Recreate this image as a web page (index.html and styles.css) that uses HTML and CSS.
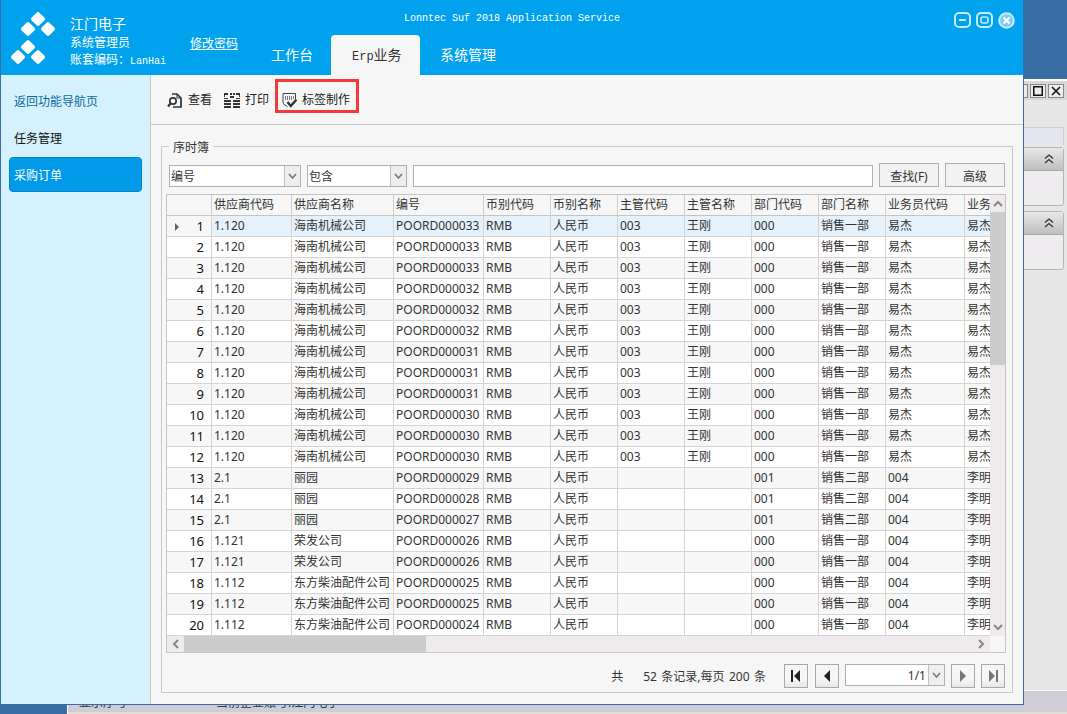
FILE: index.html
```html
<!DOCTYPE html>
<html lang="zh-CN">
<head>
  <meta charset="UTF-8" />
  <title>序时簿</title>
  <link rel="stylesheet" href="styles.css">
</head>
<body>

  <!-- window left open behind the app -->
  <div class="back-window">
    <div class="back-title">
      <span class="back-btn"></span>
      <span class="back-btn"><svg width="10" height="10" viewBox="0 0 10 10"><rect x="0.75" y="0.75" width="8.5" height="8.5" fill="none" stroke="#111" stroke-width="1.5"/></svg></span>
      <span class="back-btn"><svg width="10" height="10" viewBox="0 0 10 10"><path d="M1 1 L9 9 M9 1 L1 9" stroke="#111" stroke-width="1.6"/></svg></span>
    </div>
    <div class="back-body">
      <div class="back-head"></div>
      <div class="back-panel">
        <div class="back-panel-title"><svg width="12" height="10" viewBox="0 0 12 10"><path d="M2 4.5 L6 1 L10 4.5 M2 9 L6 5.5 L10 9" fill="none" stroke="#333" stroke-width="1.3"/></svg></div>
      </div>
      <div class="back-panel">
        <div class="back-panel-title"><svg width="12" height="10" viewBox="0 0 12 10"><path d="M2 4.5 L6 1 L10 4.5 M2 9 L6 5.5 L10 9" fill="none" stroke="#333" stroke-width="1.3"/></svg></div>
      </div>
    </div>
    <div class="back-status">
      <span class="back-status-a">显示序号</span>
      <span class="back-status-b">当前企业账号:江门电子</span>
    </div>
  </div>

  <!-- APP WINDOW -->
  <div class="app-window">

    <div class="top-bar">
      <svg class="logo" width="70" height="75" viewBox="0 0 70 75">
        <g fill="#fff">
          <rect x="32.5" y="13.5" width="11" height="11" rx="2" transform="rotate(45 38 19)"/>
          <rect x="22.5" y="23.5" width="11" height="11" rx="2" transform="rotate(45 28 29)"/>
          <rect x="42.5" y="23.5" width="11" height="11" rx="2" transform="rotate(45 48 29)"/>
          <rect x="22.5" y="41.5" width="11" height="11" rx="2" transform="rotate(45 28 47)"/>
          <rect x="12.5" y="51.5" width="11" height="11" rx="2" transform="rotate(45 18 57)"/>
          <rect x="32.5" y="51.5" width="11" height="11" rx="2" transform="rotate(45 38 57)"/>
        </g>
      </svg>
      <div class="user-info">
        <div class="company">江门电子</div>
        <div class="user-name">系统管理员</div>
        <div class="user-code">账套编码&#xFF1A;<span class="mono">LanHai</span></div>
      </div>
      <a class="change-pwd" href="#">修改密码</a>
      <div class="top-right">
        <div class="title-row">
          <span class="app-title">Lonntec Suf 2018 Application Service</span>
          <div class="win-controls">
            <svg width="17" height="16" viewBox="0 0 17 16"><rect x="1" y="1" width="15" height="14" rx="4" fill="none" stroke="#c4ecfd" stroke-width="2"/><rect x="5" y="7" width="7" height="2" fill="#c4ecfd"/></svg>
            <svg width="17" height="16" viewBox="0 0 17 16"><rect x="1" y="1" width="15" height="14" rx="4" fill="none" stroke="#c4ecfd" stroke-width="2"/><rect x="5" y="5" width="7" height="6" rx="2" fill="none" stroke="#c4ecfd" stroke-width="1.6"/></svg>
            <svg width="17" height="17" viewBox="0 0 17 17"><circle cx="8.5" cy="8.5" r="7.3" fill="#7fcdf2" stroke="#c4ecfd" stroke-width="2"/><path d="M5.5 5.5 L11.5 11.5 M11.5 5.5 L5.5 11.5" stroke="#fff" stroke-width="2.2"/></svg>
          </div>
        </div>
        <div class="tabs">
          <a class="tab tab-first" href="#">工作台</a>
          <a class="tab active" href="#"><span class="mono-tab">Erp</span>业务</a>
          <a class="tab" href="#">系统管理</a>
        </div>
      </div>
    </div>

    <div class="app-body">

      <div class="sidebar">
        <a class="side-item back-link" href="#">返回功能导航页</a>
        <a class="side-item" href="#">任务管理</a>
        <a class="side-item selected" href="#">采购订单</a>
      </div>

      <div class="main">

        <div class="toolbar">
          <a class="tool tool-view" href="#">
            <svg width="15" height="15" viewBox="0 0 15 15">
              <path d="M5 1 H10 L14 5 V14 H6" fill="none" stroke="#333" stroke-width="1.7"/>
              <path d="M10 1 V5 H14" fill="none" stroke="#333" stroke-width="1"/>
              <circle cx="6" cy="8" r="3.2" fill="#f6f6f6" stroke="#333" stroke-width="1.7"/>
              <path d="M3.6 10.5 L1 13.5" stroke="#333" stroke-width="2.2"/>
            </svg>
            查看
          </a>
          <a class="tool tool-print" href="#">
            <svg width="16" height="15" viewBox="0 0 16 15" fill="#333">
              <rect x="0" y="0" width="4" height="2"/><rect x="6" y="0" width="2" height="2"/><rect x="9" y="0" width="2" height="2"/><rect x="12" y="0" width="4" height="2"/>
              <rect x="0" y="2" width="1" height="2"/><rect x="6" y="3" width="4" height="2"/><rect x="15" y="2" width="1" height="2"/>
              <rect x="0" y="5" width="4" height="1"/><rect x="12" y="5" width="4" height="1"/>
              <rect x="0" y="7" width="7" height="2"/><rect x="9" y="7" width="7" height="2"/>
              <rect x="0" y="10" width="7" height="2"/><rect x="9" y="10" width="7" height="2"/>
              <rect x="0" y="13" width="7" height="2"/><rect x="9" y="13" width="7" height="2"/>
            </svg>
            打印
          </a>
          <a class="tool tool-label" href="#">
            <span class="red-mark"></span>
            <svg width="15" height="15" viewBox="0 0 15 15">
              <path d="M1 0.5 H13.5 V6 M1 0.5 V9 Q1 11 3 12 L5.5 13.5" fill="none" stroke="#444" stroke-width="1"/>
              <path d="M3.5 3 V7 M5.5 3 V7 M7.5 3 V7 M9.5 3 V7 M11.5 3 V6" stroke="#777" stroke-width="1"/>
              <path d="M5.5 9 L8.8 13 L14.5 6.5" fill="none" stroke="#333" stroke-width="2.4"/>
            </svg>
            标签制作
          </a>
        </div>

        <div class="group">
          <span class="group-title">序时簿</span>

          <div class="search-row">
            <div class="combo combo-field"><span class="combo-text">编号</span><span class="combo-arrow"><svg width="9" height="6" viewBox="0 0 9 6"><path d="M1 1 L4.5 5 L8 1" fill="none" stroke="#777" stroke-width="1.6"/></svg></span></div>
            <div class="combo combo-op"><span class="combo-text">包含</span><span class="combo-arrow"><svg width="9" height="6" viewBox="0 0 9 6"><path d="M1 1 L4.5 5 L8 1" fill="none" stroke="#777" stroke-width="1.6"/></svg></span></div>
            <div class="search-input"></div>
            <button class="btn">查找(F)</button>
            <button class="btn">高级</button>
          </div>

          <div class="grid">
            <div class="grid-main">
              <div class="grid-clip">
                <table class="data-table">
                  <colgroup>
                    <col class="c-no"><col class="c-80"><col class="c-102"><col class="c-90"><col class="c-67"><col class="c-67"><col class="c-67"><col class="c-67"><col class="c-67"><col class="c-67"><col class="c-79"><col class="c-60">
                  </colgroup>
                  <thead>
                    <tr><th></th><th>供应商代码</th><th>供应商名称</th><th>编号</th><th>币别代码</th><th>币别名称</th><th>主管代码</th><th>主管名称</th><th>部门代码</th><th>部门名称</th><th>业务员代码</th><th>业务员名称</th></tr>
                  </thead>
                  <tbody>
                    <tr class="current"><td class="no"><span class="row-arrow"></span>1</td><td>1.120</td><td>海南机械公司</td><td>POORD000033</td><td>RMB</td><td>人民币</td><td>003</td><td>王刚</td><td>000</td><td>销售一部</td><td>易杰</td><td>易杰</td></tr>
                    <tr><td class="no">2</td><td>1.120</td><td>海南机械公司</td><td>POORD000033</td><td>RMB</td><td>人民币</td><td>003</td><td>王刚</td><td>000</td><td>销售一部</td><td>易杰</td><td>易杰</td></tr>
                    <tr><td class="no">3</td><td>1.120</td><td>海南机械公司</td><td>POORD000033</td><td>RMB</td><td>人民币</td><td>003</td><td>王刚</td><td>000</td><td>销售一部</td><td>易杰</td><td>易杰</td></tr>
                    <tr><td class="no">4</td><td>1.120</td><td>海南机械公司</td><td>POORD000032</td><td>RMB</td><td>人民币</td><td>003</td><td>王刚</td><td>000</td><td>销售一部</td><td>易杰</td><td>易杰</td></tr>
                    <tr><td class="no">5</td><td>1.120</td><td>海南机械公司</td><td>POORD000032</td><td>RMB</td><td>人民币</td><td>003</td><td>王刚</td><td>000</td><td>销售一部</td><td>易杰</td><td>易杰</td></tr>
                    <tr><td class="no">6</td><td>1.120</td><td>海南机械公司</td><td>POORD000032</td><td>RMB</td><td>人民币</td><td>003</td><td>王刚</td><td>000</td><td>销售一部</td><td>易杰</td><td>易杰</td></tr>
                    <tr><td class="no">7</td><td>1.120</td><td>海南机械公司</td><td>POORD000031</td><td>RMB</td><td>人民币</td><td>003</td><td>王刚</td><td>000</td><td>销售一部</td><td>易杰</td><td>易杰</td></tr>
                    <tr><td class="no">8</td><td>1.120</td><td>海南机械公司</td><td>POORD000031</td><td>RMB</td><td>人民币</td><td>003</td><td>王刚</td><td>000</td><td>销售一部</td><td>易杰</td><td>易杰</td></tr>
                    <tr><td class="no">9</td><td>1.120</td><td>海南机械公司</td><td>POORD000031</td><td>RMB</td><td>人民币</td><td>003</td><td>王刚</td><td>000</td><td>销售一部</td><td>易杰</td><td>易杰</td></tr>
                    <tr><td class="no">10</td><td>1.120</td><td>海南机械公司</td><td>POORD000030</td><td>RMB</td><td>人民币</td><td>003</td><td>王刚</td><td>000</td><td>销售一部</td><td>易杰</td><td>易杰</td></tr>
                    <tr><td class="no">11</td><td>1.120</td><td>海南机械公司</td><td>POORD000030</td><td>RMB</td><td>人民币</td><td>003</td><td>王刚</td><td>000</td><td>销售一部</td><td>易杰</td><td>易杰</td></tr>
                    <tr><td class="no">12</td><td>1.120</td><td>海南机械公司</td><td>POORD000030</td><td>RMB</td><td>人民币</td><td>003</td><td>王刚</td><td>000</td><td>销售一部</td><td>易杰</td><td>易杰</td></tr>
                    <tr><td class="no">13</td><td>2.1</td><td>丽园</td><td>POORD000029</td><td>RMB</td><td>人民币</td><td></td><td></td><td>001</td><td>销售二部</td><td>004</td><td>李明</td></tr>
                    <tr><td class="no">14</td><td>2.1</td><td>丽园</td><td>POORD000028</td><td>RMB</td><td>人民币</td><td></td><td></td><td>001</td><td>销售二部</td><td>004</td><td>李明</td></tr>
                    <tr><td class="no">15</td><td>2.1</td><td>丽园</td><td>POORD000027</td><td>RMB</td><td>人民币</td><td></td><td></td><td>001</td><td>销售二部</td><td>004</td><td>李明</td></tr>
                    <tr><td class="no">16</td><td>1.121</td><td>荣发公司</td><td>POORD000026</td><td>RMB</td><td>人民币</td><td></td><td></td><td>000</td><td>销售一部</td><td>004</td><td>李明</td></tr>
                    <tr><td class="no">17</td><td>1.121</td><td>荣发公司</td><td>POORD000026</td><td>RMB</td><td>人民币</td><td></td><td></td><td>000</td><td>销售一部</td><td>004</td><td>李明</td></tr>
                    <tr><td class="no">18</td><td>1.112</td><td>东方柴油配件公司</td><td>POORD000025</td><td>RMB</td><td>人民币</td><td></td><td></td><td>000</td><td>销售一部</td><td>004</td><td>李明</td></tr>
                    <tr><td class="no">19</td><td>1.112</td><td>东方柴油配件公司</td><td>POORD000025</td><td>RMB</td><td>人民币</td><td></td><td></td><td>000</td><td>销售一部</td><td>004</td><td>李明</td></tr>
                    <tr><td class="no">20</td><td>1.112</td><td>东方柴油配件公司</td><td>POORD000024</td><td>RMB</td><td>人民币</td><td></td><td></td><td>000</td><td>销售一部</td><td>004</td><td>李明</td></tr>
                  </tbody>
                </table>
              </div>
              <div class="vscroll">
                <span class="scroll-btn"><svg width="10" height="7" viewBox="0 0 10 7"><path d="M1 6 L5 2 L9 6" fill="none" stroke="#888" stroke-width="2"/></svg></span>
                <span class="vthumb"></span>
                <span class="scroll-fill"></span>
                <span class="scroll-btn"><svg width="10" height="7" viewBox="0 0 10 7"><path d="M1 1 L5 5 L9 1" fill="none" stroke="#888" stroke-width="2"/></svg></span>
              </div>
            </div>
            <div class="hscroll">
              <span class="scroll-btn h"><svg width="7" height="10" viewBox="0 0 7 10"><path d="M6 1 L2 5 L6 9" fill="none" stroke="#888" stroke-width="2"/></svg></span>
              <span class="hthumb"></span>
              <span class="scroll-fill"></span>
              <span class="scroll-btn h"><svg width="7" height="10" viewBox="0 0 7 10"><path d="M1 1 L5 5 L1 9" fill="none" stroke="#888" stroke-width="2"/></svg></span>
              <span class="scroll-corner"></span>
            </div>
          </div>

          <div class="pager">
            <span class="pager-total">共</span>
            <span class="pager-count">52 条记录,每页 200 条</span>
            <button class="page-btn"><svg width="12" height="14" viewBox="0 0 12 14" fill="#222"><rect x="1" y="1" width="2" height="12"/><path d="M10 1 V13 L4 7 Z"/></svg></button>
            <button class="page-btn"><svg width="12" height="14" viewBox="0 0 12 14" fill="#222"><path d="M9 1 V13 L3 7 Z"/></svg></button>
            <div class="combo combo-page"><span class="combo-text">1/1</span><span class="combo-arrow"><svg width="9" height="6" viewBox="0 0 9 6"><path d="M1 1 L4.5 5 L8 1" fill="none" stroke="#777" stroke-width="1.6"/></svg></span></div>
            <button class="page-btn"><svg width="12" height="14" viewBox="0 0 12 14" fill="#777"><path d="M3 1 V13 L9 7 Z"/></svg></button>
            <button class="page-btn"><svg width="12" height="14" viewBox="0 0 12 14" fill="#777"><path d="M2 1 V13 L8 7 Z"/><rect x="9" y="1" width="2" height="12"/></svg></button>
          </div>
        </div>

      </div>
    </div>
  </div>

</body>
</html>
```

FILE: styles.css
```css
* {
  margin: 0;
  padding: 0;
  box-sizing: border-box;
}

html, body {
  width: 1067px;
  height: 714px;
  overflow: hidden;
}

body {
  position: relative;
  background: #386ea3;
  font-family: "Noto Sans", "Noto Sans CJK SC", sans-serif;
  font-size: 12px;
  color: #333;
}

a {
  color: inherit;
  text-decoration: none;
}

.mono {
  font-family: "Liberation Mono", "Noto Sans CJK SC", monospace;
  font-size: 10px;
}

/* Window behind the app */
.back-window {
  position: absolute;
  left: 67px;
  top: 79px;
  right: 0;
  bottom: 0;
  display: flex;
  flex-direction: column;
  background: #e6e6e6;
  border-top: 2px solid #fff;
  border-left: 1px solid #fff;
}

.back-title {
  height: 19px;
  background: #d8d8d8;
  display: flex;
  justify-content: flex-end;
  align-items: center;
  gap: 2px;
  padding-right: 3px;
}

.back-btn {
  width: 16px;
  height: 14px;
  background: #ececec;
  border: 1px solid #888;
  display: flex;
  align-items: center;
  justify-content: center;
}

.back-body {
  flex: 1;
  display: flex;
  flex-direction: column;
  gap: 5px;
  padding: 27px 3px 0 0;
  background: #e7e7e7;
}

.back-head {
  height: 18px;
  margin-bottom: -3px;
  background: #e6e6f0;
  border-top: 1px solid #cfcfd8;
  border-right: 1px solid #cfcfd8;
}

.back-panel {
  height: 59px;
  background: #eeecee;
  border: 1px solid #b5b5b5;
  border-radius: 3px;
}

.back-panel-title {
  height: 23px;
  background: linear-gradient(#e8e8e8, #bfbfbf);
  border-bottom: 1px solid #a8a8a8;
  display: flex;
  justify-content: flex-end;
  align-items: center;
  padding-right: 8px;
}

.back-status {
  height: 24px;
  background: #cfccd8;
  border-top: 1px solid #f4f4f4;
  border-bottom: 2px solid #e0dfd8;
  display: flex;
  align-items: flex-end;
  font-size: 12px;
  line-height: 16px;
  color: #333;
  padding: 0 0 1px 11px;
}

.back-status-b {
  margin-left: 89px;
}

/* App window */
.app-window {
  position: absolute;
  left: 0;
  top: 0;
  width: 1024px;
  height: 705px;
  display: flex;
  flex-direction: column;
  border: 1px solid #386ea3;
  border-top: 0;
  background: #f6f6f6;
}

.top-bar {
  height: 75px;
  background: #00a2ee;
  color: #fff;
  display: flex;
  flex-shrink: 0;
}

.logo {
  flex-shrink: 0;
  margin-left: -1px;
}

.user-info {
  width: 120px;
  padding-top: 14px;
  flex-shrink: 0;
}

.company {
  font-size: 14px;
  line-height: 20px;
}

.user-name {
  line-height: 18px;
}

.user-code {
  line-height: 15px;
}

.change-pwd {
  flex-shrink: 0;
  width: 61px;
  margin-top: 35px;
  height: 17px;
  line-height: 17px;
  text-decoration: underline;
}

.top-right {
  flex: 1;
  display: flex;
  flex-direction: column;
}

.title-row {
  height: 35px;
  display: flex;
  align-items: flex-start;
  padding-left: 153px;
  padding-right: 8px;
}

.app-title {
  font-family: "Liberation Mono", monospace;
  font-size: 10px;
  line-height: 14px;
  margin-top: 12px;
}

.win-controls {
  margin-left: auto;
  margin-top: 12px;
  display: flex;
  gap: 5px;
}

.tabs {
  display: flex;
  height: 40px;
}

.tab {
  padding: 0 20px;
  font-size: 14px;
  line-height: 40px;
}

.tab-first {
  padding-right: 18px;
}

.tab.active {
  background: #f6f6f6;
  color: #333;
  border-radius: 4px 4px 0 0;
  width: 89px;
  padding: 0 0 0 21px;
}

.mono-tab {
  font-family: "Liberation Mono", monospace;
  font-size: 12px;
}

.app-body {
  flex: 1;
  display: flex;
  min-height: 0;
}

/* Sidebar */
.sidebar {
  width: 150px;
  flex-shrink: 0;
  background: #d5f1fe;
  border-right: 1px solid #c8c8c8;
  display: flex;
  flex-direction: column;
  gap: 2px;
  padding: 8px 8px 0 8px;
}

.side-item {
  height: 35px;
  line-height: 35px;
  padding-left: 4px;
  color: #111;
  border: 1px solid transparent;
  border-radius: 4px;
}

.side-item.back-link {
  color: #0a6a9c;
}

.side-item.selected {
  background: #009ae8;
  border-color: #0582c8;
  color: #fff;
}

/* Main area */
.main {
  flex: 1;
  display: flex;
  flex-direction: column;
  min-width: 0;
}

.toolbar {
  height: 50px;
  flex-shrink: 0;
  border-bottom: 1px solid #c8c8c8;
  display: flex;
  align-items: center;
  padding: 0 0 0 16px;
}

.tool {
  display: flex;
  align-items: center;
  gap: 6px;
  position: relative;
  color: #222;
  line-height: 16px;
  margin-top: 1px;
}

.tool-view {
  width: 57px;
}

.tool-print {
  width: 58px;
  gap: 5px;
}

.tool-label {
  gap: 5px;
}

.red-mark {
  position: absolute;
  left: -7px;
  top: -13px;
  width: 84px;
  height: 34px;
  border: 3px solid #f33a3a;
}

.group {
  position: relative;
  margin: 21px 10px 11px 10px;
  flex: 1;
  border: 1px solid #c8c8c8;
  padding: 16px 7px 0 4px;
}

.group-title {
  position: absolute;
  left: 7px;
  top: -7px;
  padding: 0 4px;
  background: #f6f6f6;
  line-height: 16px;
  color: #333;
}

.search-row {
  display: flex;
  align-items: flex-end;
  gap: 6px;
  padding-left: 3px;
}

.combo {
  height: 22px;
  display: flex;
  background: #fff;
  border: 1px solid #b0b0b0;
  flex-shrink: 0;
}

.combo-text {
  flex: 1;
  line-height: 21px;
  padding-left: 1px;
  color: #333;
}

.combo-arrow {
  width: 16px;
  background: #eeeeee;
  border-left: 1px solid #c0c0c0;
  display: flex;
  align-items: center;
  justify-content: center;
}

.combo-field {
  width: 132px;
}

.combo-op {
  width: 100px;
}

.search-input {
  width: 460px;
  height: 22px;
  background: #fff;
  border: 1px solid #b0b0b0;
  flex-shrink: 0;
}

.btn {
  width: 60px;
  height: 24px;
  padding-top: 1px;
  background: #f2f2f2;
  border: 1px solid #b0b0b0;
  font: inherit;
  color: #333;
  flex-shrink: 0;
}

/* Grid */
.grid {
  margin-top: 7px;
  height: 459px;
  width: 840px;
  border: 1px solid #c4c4c4;
  display: flex;
  flex-direction: column;
  background: #f6f6f6;
}

.grid-main {
  height: 441px;
  display: flex;
}

.grid-clip {
  width: 824px;
  overflow: hidden;
}

.data-table {
  table-layout: fixed;
  border-collapse: separate;
  border-spacing: 0;
  width: 858px;
}

.c-no { width: 45px; }
.c-80 { width: 80px; }
.c-102 { width: 102px; }
.c-90 { width: 90px; }
.c-67 { width: 67px; }
.c-79 { width: 79px; }
.c-60 { width: 60px; }

.data-table th,
.data-table td {
  height: 21px;
  padding: 0 2px;
  border-right: 1px solid #d4d4d4;
  border-bottom: 1px solid #d4d4d4;
  font-weight: normal;
  text-align: left;
  white-space: nowrap;
  overflow: hidden;
  line-height: 20px;
  color: #333;
}

.data-table th {
  background: #f6f6f6;
  border-right-color: #cfcfcf;
  border-bottom: 1px solid #c4c4c4;
}

.data-table tbody tr:nth-child(even) td {
  background: #fff;
}

.data-table tbody tr:nth-child(odd) td {
  background: #f7f7f7;
}

.data-table tbody tr.current td {
  background: #e5f1fb;
}

.data-table tbody td.no,
.data-table tbody tr.current td.no {
  background: #f6f6f6;
  text-align: right;
  padding-right: 7px;
  position: relative;
  color: #111;
  font-size: 13px;
}

.row-arrow {
  position: absolute;
  left: 8px;
  top: 7px;
  border-left: 4px solid #666;
  border-top: 4px solid transparent;
  border-bottom: 4px solid transparent;
}

/* Scrollbars */
.vscroll {
  width: 15px;
  flex-shrink: 0;
  display: flex;
  flex-direction: column;
  background: #eeeaee;
}

.scroll-btn {
  height: 17px;
  flex-shrink: 0;
  display: flex;
  align-items: center;
  justify-content: center;
  background: #eeeaee;
}

.vthumb {
  height: 153px;
  background: #cccccc;
}

.scroll-fill {
  flex: 1;
}

.hscroll {
  height: 16px;
  display: flex;
  background: #eeeaee;
}

.scroll-btn.h {
  width: 17px;
  height: 16px;
}

.hthumb {
  width: 242px;
  background: #cccccc;
}

.scroll-corner {
  width: 15px;
  background: #f6f6f6;
}

/* Pager */
.pager {
  margin-top: 11px;
  display: flex;
  align-items: center;
  height: 24px;
  justify-content: flex-end;
  padding-right: 0;
  color: #333;
}

.pager-total {
  margin-right: 20px;
}

.pager-count {
  margin-right: 18px;
  word-spacing: 1.3px;
}

.page-btn {
  width: 24px;
  height: 24px;
  background: linear-gradient(#f6f6f6 60%, #e8e8e8);
  border: 1px solid #a8a8a8;
  display: flex;
  align-items: center;
  justify-content: center;
  margin-right: 7px;
}

.page-btn:nth-of-type(2),
.page-btn:nth-of-type(3) {
  margin-right: 6px;
}

.page-btn:last-child {
  margin-right: 0;
}

.combo-page {
  width: 100px;
  height: 22px;
  margin-right: 6px;
  align-self: flex-start;
}

.combo-page .combo-text {
  text-align: right;
  padding-right: 2px;
}
```
